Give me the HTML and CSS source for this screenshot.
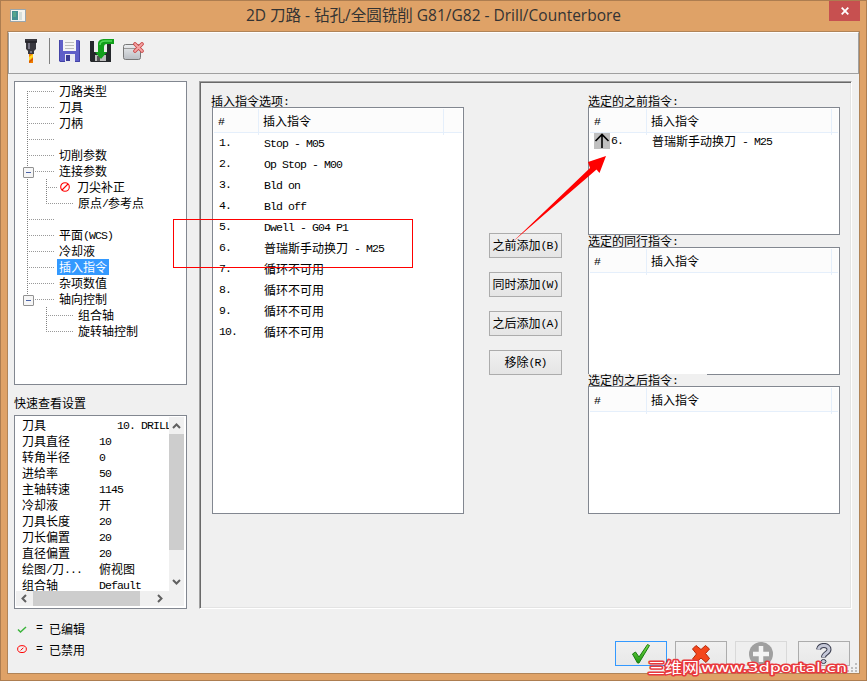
FILE: index.html
```html
<!DOCTYPE html>
<html lang="zh-CN">
<head>
  <meta charset="UTF-8">
  <meta name="viewport" content="width=device-width, initial-scale=1">
  <title>2D 刀路 - 钻孔/全圆铣削</title>
  <link rel="stylesheet" href="styles.css">
</head>
<body>
  <div class="window">
    <header class="titlebar">
      <svg class="app-icon" width="16" height="14" viewBox="0 0 16 14">
        <rect x=".5" y=".5" width="15" height="12" fill="#f4f4f0" stroke="#9ba6ab"/>
        <rect x="2" y="2" width="6" height="9" fill="#438f93"/>
        <rect x="3" y="3" width="3" height="5" fill="#55a58c"/>
        <rect x="9" y="3" width="3" height="8" fill="#d6dedb"/>
      </svg>
      <h1>2D 刀路 - 钻孔/全圆铣削 G81/G82 - Drill/Counterbore</h1>
      <button class="close" aria-label="Close">
        <svg width="8" height="8" viewBox="0 0 8 8"><path d="M.7.7l6.6 6.6M7.3.7L.7 7.3" stroke="#fff" stroke-width="1.8"/></svg>
      </button>
    </header>

    <div class="client">
      <div class="toolbar">
        <svg class="tool-drill" width="14" height="25" viewBox="0 0 14 25">
          <path d="M1 0h12v3l-1 1v6l-2 2v3H4v-3l-2-2V4L1 3z" fill="#38383f"/>
          <path d="M4 4h2v6H4zM6 12h2v2H6z" fill="#777584"/>
          <path d="M1 3h12" stroke="#15151a"/>
          <rect x="5" y="15" width="4" height="9" fill="#ef7d00"/>
          <path d="M5 18l4-3v3l-4 4z" fill="#ffd81e"/>
          <path d="M5 24v-2l4-3v2z" fill="#d65a00"/>
        </svg>
        <span class="divider"></span>
        <svg class="tool-save" width="21" height="22" viewBox="0 0 21 22">
          <path d="M0 0h20l1 1v21H1l-1-1z" fill="#5f5fc8"/>
          <path d="M.5 0v21M20.500 1v20.500H1" stroke="#4343a6" fill="none"/>
          <rect x="4" y="0" width="13" height="11" fill="#f4f4f4"/>
          <path d="M6 2.500h9M6 5.500h9M6 8.500h9" stroke="#bcbcbc"/>
          <rect x="6" y="14" width="10" height="8" fill="#e9e9f2"/>
          <rect x="7" y="15" width="4" height="6" fill="#3b3b93"/>
        </svg>
        <svg class="tool-export" width="24" height="23" viewBox="0 0 24 23">
          <path d="M0 2h21v21H1l-1-1z" fill="#25282b"/>
          <rect x="4" y="2" width="13" height="11" fill="#eee"/>
          <rect x="5" y="16" width="11" height="6" fill="#bcbcbc"/>
          <rect x="7" y="17" width="3" height="5" fill="#555"/>
          <path d="M8 5c0-4 3-5 7-5h9v5h-7c-2 0-3 1-3 3v5h3l-6 7-6-7h3z" fill="#12a01b"/>
          <path d="M10 6c0-3 2-4 5-4h7" stroke="#54d85a" stroke-width="1.500" fill="none"/>
        </svg>
        <svg class="tool-remove" width="21" height="19" viewBox="0 0 21 19">
          <defs>
            <linearGradient id="box" x2="0" y2="1"><stop offset="0" stop-color="#eceef0"/><stop offset="1" stop-color="#b9bdc3"/></linearGradient>
          </defs>
          <rect x=".5" y="2.500" width="17" height="15" rx="2" fill="url(#box)" stroke="#777"/>
          <path d="M1 6.500h16" stroke="#999"/>
          <path d="M12 2l7 7M19 2l-7 7" stroke="#c94444" stroke-width="3.600" stroke-linecap="round"/>
          <path d="M12 2l7 7M19 2l-7 7" stroke="#f3a5a5" stroke-width="1.800" stroke-linecap="round"/>
        </svg>
      </div>

      <main>
        <aside>
          <ul class="tree">
            <li><i class="guide first"></i><span>刀路类型</span></li>
            <li><i class="guide"></i><span>刀具</span></li>
            <li><i class="guide"></i><span>刀柄</span></li>
            <li><i class="guide"></i></li>
            <li><i class="guide"></i><span>切削参数</span></li>
            <li><i class="guide node"></i><span>连接参数</span></li>
            <li class="child"><i class="trunk"></i><i class="guide short"></i><svg class="forbid" width="10" height="10" viewBox="0 0 10 10"><circle cx="5" cy="5" r="4.300"/><path d="M2 8l6-6"/></svg><span>刀尖补正</span></li>
            <li class="child"><i class="trunk"></i><i class="guide last"></i><span>原点<b>/</b>参考点</span></li>
            <li><i class="guide"></i></li>
            <li><i class="guide"></i><span>平面<b>(WCS)</b></span></li>
            <li><i class="guide"></i><span>冷却液</span></li>
            <li><i class="guide"></i><span class="selected">插入指令</span></li>
            <li><i class="guide"></i><span>杂项数值</span></li>
            <li><i class="guide node last"></i><span>轴向控制</span></li>
            <li class="child"><i class="trunk none"></i><i class="guide"></i><span>组合轴</span></li>
            <li class="child"><i class="trunk none"></i><i class="guide last"></i><span>旋转轴控制</span></li>
          </ul>

          <h2>快速查看设置</h2>
          <div class="quick">
            <dl>
              <dt>刀具</dt><dd class="indent"><b>10. DRILL</b></dd>
              <dt>刀具直径</dt><dd><b>10</b></dd>
              <dt>转角半径</dt><dd><b>0</b></dd>
              <dt>进给率</dt><dd><b>50</b></dd>
              <dt>主轴转速</dt><dd><b>1145</b></dd>
              <dt>冷却液</dt><dd>开</dd>
              <dt>刀具长度</dt><dd><b>20</b></dd>
              <dt>刀长偏置</dt><dd><b>20</b></dd>
              <dt>直径偏置</dt><dd><b>20</b></dd>
              <dt>绘图<b>/</b>刀<b>...</b></dt><dd>俯视图</dd>
              <dt>组合轴</dt><dd><b>Default</b></dd>
            </dl>
            <div class="vscroll">
              <svg width="15" height="17" viewBox="0 0 15 17"><path d="M4 11l3.500-3.500L11 11"/></svg>
              <div class="vthumb"></div>
              <svg width="15" height="17" viewBox="0 0 15 17"><path d="M4 6l3.500 3.500L11 6"/></svg>
            </div>
            <div class="hscroll">
              <svg width="17" height="15" viewBox="0 0 17 15"><path d="M10 4L6.500 7.500 10 11"/></svg>
              <div class="hthumb"></div>
              <svg class="right" width="17" height="15" viewBox="0 0 17 15"><path d="M7 4l3.500 3.500L7 11"/></svg>
            </div>
          </div>

          <div class="legend">
            <p><svg width="10" height="10" viewBox="0 0 10 10"><path d="M1 5.500L3.500 8 9 3" fill="none" stroke="#3cb43c" stroke-width="1.500"/></svg><b>=</b>已编辑</p>
            <p><svg class="forbid" width="11" height="10" viewBox="0 0 11 10"><ellipse cx="5.500" cy="4" rx="4.800" ry="3.800"/><path d="M4 5.500l3-3"/></svg><b>=</b>已禁用</p>
          </div>
        </aside>

        <section class="panel">
          <div class="options">
            <h3>插入指令选项<b>:</b></h3>
            <div class="list tall">
              <div class="list-head"><span><b>#</b></span><span>插入指令</span><span></span></div>
              <div class="row"><b>1.</b><span><b>Stop - M05</b></span></div>
              <div class="row"><b>2.</b><span><b>Op Stop - M00</b></span></div>
              <div class="row"><b>3.</b><span><b>Bld on</b></span></div>
              <div class="row"><b>4.</b><span><b>Bld off</b></span></div>
              <div class="row"><b>5.</b><span><b>Dwell - G04 P1</b></span></div>
              <div class="row"><b>6.</b><span>普瑞斯手动换刀<b> - M25</b></span></div>
              <div class="row"><b>7.</b><span>循环不可用</span></div>
              <div class="row"><b>8.</b><span>循环不可用</span></div>
              <div class="row"><b>9.</b><span>循环不可用</span></div>
              <div class="row"><b>10.</b><span>循环不可用</span></div>
            </div>
          </div>

          <div class="actions">
            <button>之前添加<b>(B)</b></button>
            <button>同时添加<b>(W)</b></button>
            <button>之后添加<b>(A)</b></button>
            <button>移除<b>(R)</b></button>
          </div>

          <div class="chosen">
            <h3>选定的之前指令<b>:</b></h3>
            <div class="list">
              <div class="list-head"><span><b>#</b></span><span>插入指令</span><span></span></div>
              <div class="row">
                <svg width="16" height="16" viewBox="0 0 16 16"><rect width="16" height="16" fill="#c0c0c0"/><path d="M8 15V2M1.500 8L8 1.500 14.500 8" fill="none" stroke="#000" stroke-width="1.600"/></svg>
                <b>6.</b><span>普瑞斯手动换刀<b> - M25</b></span>
              </div>
            </div>
            <h3>选定的同行指令<b>:</b></h3>
            <div class="list">
              <div class="list-head"><span><b>#</b></span><span>插入指令</span><span></span></div>
            </div>
            <h3 class="overlap">选定的之后指令<b>:</b></h3>
            <div class="list">
              <div class="list-head"><span><b>#</b></span><span>插入指令</span><span></span></div>
            </div>
          </div>
        </section>
      </main>

      <footer>
        <button class="default" aria-label="OK">
          <svg width="20" height="22" viewBox="0 0 20 22">
            <defs><linearGradient id="ok" x2="0" y2="1"><stop offset="0" stop-color="#7be04a"/><stop offset="1" stop-color="#1c9410"/></linearGradient></defs>
            <path d="M1.500 11l3-2 3.500 5L16.500 1.500l2 1L8 20H6.500z" fill="url(#ok)" stroke="#187a12"/>
          </svg>
        </button>
        <button aria-label="Cancel">
          <svg width="20" height="20" viewBox="0 0 20 20">
            <path d="M1.500 5L5 1.500l5 4 4.500-4L18.500 5l-4 4.500 4 5L15 18.500l-5-4.500-5 4.500L1.500 15l4-5z" fill="#f4471c" stroke="#b52708"/>
          </svg>
        </button>
        <button class="disabled" aria-label="Add">
          <svg width="24" height="24" viewBox="0 0 24 24"><circle cx="12" cy="12" r="12" fill="#a0a0a0"/><path d="M12 4v16M4 12h16" stroke="#f4f4f4" stroke-width="4.500"/></svg>
        </button>
        <button class="help" aria-label="Help">
          <svg width="16" height="22" viewBox="0 0 16 22">
            <path d="M2.500 6.500C3 1 13 1 13 6.500c0 4-5.500 3.500-5.500 8" fill="none" stroke="#3c3f50" stroke-width="5"/>
            <path d="M2.500 6.500C3 1 13 1 13 6.500c0 4-5.500 3.500-5.500 7.600" fill="none" stroke="#c5c8d8" stroke-width="3"/>
            <ellipse cx="7.500" cy="18.500" rx="2.500" ry="2" fill="#c5c8d8" stroke="#3c3f50"/>
          </svg>
        </button>
      </footer>
    </div>

    <!-- markup drawn over the dialog -->
    <svg class="annotations" width="867" height="681" viewBox="0 0 867 681">
      <path fill="#bdbdbd" d="M855 663h2v2h-2zM851 667h2v2h-2zM855 667h2v2h-2zM847 670h2v2h-2zM851 670h2v2h-2zM855 670h2v2h-2z"/>
      <rect x="173.500" y="219.500" width="239" height="48" fill="none" stroke="#f00"/>
      <path d="M512 242.500L590 168l-2-6 18-6-6.500 17-3-3.500z" fill="#f00"/>
      <g class="watermark">
        <text x="648" y="673" class="cjk" textLength="51" lengthAdjust="spacingAndGlyphs">三维网</text>
        <text x="701" y="672" textLength="146" lengthAdjust="spacingAndGlyphs">www.3dportal.cn</text>
      </g>
    </svg>
  </div>
</body>
</html>
```
FILE: styles.css
```css
* {
  box-sizing: border-box;
}
body {
  margin: 0;
  font-family: 'Noto Sans CJK SC', sans-serif;
  font-size: 12px;
  line-height: 16px;
  color: #000;
}
h1, h2, h3, p, ul, dl, dd {
  margin: 0;
  padding: 0;
  font-weight: normal;
}
/* half-width characters take exactly 6px each */
b {
  position: relative;
  top: -1px;
  font-family: 'Liberation Mono', monospace;
  font-size: 11.5px;
  font-weight: normal;
  letter-spacing: -0.9px;
  white-space: pre;
}
button {
  font: inherit;
  color: inherit;
  padding: 0;
}
svg {
  display: block;
  flex: none;
}
.window {
  position: relative;
  width: 867px;
  height: 681px;
  background: #dfa267;
  border: 1px solid #ad7d50;
  padding: 0 6px 6px;
  overflow: hidden;
}
.titlebar {
  display: flex;
  height: 30px;
}
.app-icon {
  margin: 8px 0 0 3px;
}
.titlebar h1 {
  flex: 1;
  text-align: center;
  padding-left: 12px;
  font-family: 'Open Sans', 'Noto Sans CJK SC', sans-serif;
  font-size: 15.5px;
  line-height: 29px;
  color: #333;
  white-space: nowrap;
}
.close {
  width: 31px;
  height: 20px;
  display: flex;
  align-items: center;
  justify-content: center;
  background: #c75050;
  border: 0;
}
.client {
  width: 853px;
  height: 643px;
  background: #f0f0f0;
  border: 1px solid #b08458;
}
.toolbar {
  height: 42px;
  display: flex;
  align-items: flex-start;
  border: 1px solid #a0a0a0;
  border-top-color: #fff;
  box-shadow: inset 1px 0 #fff;
}
.tool-drill {
  margin: 6px 0 0 15px;
}
.divider {
  width: 1px;
  height: 26px;
  margin: 5px 0 0 11px;
  background: #808080;
}
.tool-save {
  margin: 7px 0 0 9px;
}
.tool-export {
  margin: 6px 0 0 10px;
}
.tool-remove {
  margin: 9px 0 0 9px;
}
main {
  display: flex;
  gap: 12px;
  padding: 7px 0 0 6px;
}
aside {
  width: 173px;
}
.tree {
  height: 304px;
  padding: 1px 0 0 12px;
  background: #fff;
  border: 1px solid #828790;
  list-style: none;
}
.tree li {
  display: flex;
  height: 16px;
}
.tree span {
  padding: 0 2px;
  margin-left: 3px;
  white-space: nowrap;
}
.tree .selected {
  background: #3399ff;
  color: #fff;
}
.guide, .trunk {
  flex: none;
  width: 27px;
  height: 16px;
  position: relative;
  background:
    repeating-linear-gradient(to bottom, #808080 0 1px, transparent 1px 2px) 0 0 / 1px 16px no-repeat,
    repeating-linear-gradient(to right, #999 0 1px, transparent 1px 2px) 0 8px / 27px 1px no-repeat;
}
.trunk {
  width: 19px;
  background-size: 1px 16px, 0 0;
}
.trunk.none {
  background: none;
}
.guide.first {
  background-position: 0 8px, 0 8px;
}
.guide.last {
  background-size: 1px 8px, 27px 1px;
}
.guide.short {
  width: 12px;
}
.guide.node::before {
  content: '';
  position: absolute;
  left: -4px;
  top: 4px;
  width: 9px;
  height: 9px;
  border: 1px solid #919191;
  border-radius: 1px;
  background: linear-gradient(#4b63a7, #4b63a7) center / 5px 1px no-repeat #f6f6f6;
}
.forbid {
  fill: none;
  stroke: #f00;
  stroke-width: 1.1;
}
.tree .forbid {
  margin: 3px 2px 0;
}
.tree .forbid + span {
  margin-left: 3px;
}
h2 {
  font-size: 12px;
  line-height: 16px;
  margin: 10px 0 4px;
}
.quick {
  height: 194px;
  display: grid;
  grid-template: 174px 15px / 153px 15px;
  padding: 1px;
  background: #fff;
  border: 1px solid #828790;
}
.quick dl {
  display: grid;
  grid-template-columns: 77px 1fr;
  grid-auto-rows: 16px;
  align-content: start;
  padding-left: 6px;
  overflow: hidden;
  white-space: nowrap;
}
.quick .indent {
  padding-left: 18px;
  overflow: hidden;
}
.vscroll {
  display: flex;
  flex-direction: column;
  background: #f0f0f0;
}
.vthumb {
  height: 116px;
  margin-bottom: 24px;
  background: #cdcdcd;
}
.hscroll {
  grid-column: 1 / 3;
  display: flex;
  background: #f0f0f0;
}
.hthumb {
  width: 107px;
  background: #cdcdcd;
}
.hscroll .right {
  margin-left: 11px;
}
.vscroll path, .hscroll path {
  fill: none;
  stroke: #606060;
  stroke-width: 2;
}
.legend {
  padding: 12px 0 0 3px;
}
.legend p {
  display: flex;
  align-items: center;
  height: 16px;
  margin-bottom: 5px;
}
.legend svg {
  width: 10px;
}
.legend b {
  margin: 0 7px 0 9px;
}
.panel {
  width: 653px;
  height: 528px;
  display: flex;
  align-items: flex-start;
  padding: 13px 0 0 11px;
  border: 1px solid;
  border-color: #a0a0a0 #fff #fff #a0a0a0;
  box-shadow: inset 1px 1px #696969, inset -1px -1px #e3e3e3;
}
h3 {
  font-size: 12px;
  line-height: 12px;
  height: 12px;
}
.options {
  width: 253px;
  padding-left: 1px;
}
.options h3 {
  margin-left: -1px;
}
.list {
  width: 252px;
  height: 128px;
  padding: 1px;
  background: #fff;
  border: 1px solid #828790;
}
.list.tall {
  height: 407px;
}
.list-head {
  display: grid;
  grid-template-columns: 57px 185px 1fr;
  height: 24px;
  line-height: 24px;
  background: #fcfcfc;
  border-bottom: 1px solid #e5effb;
}
.list-head span {
  padding-left: 4px;
  border-right: 1px solid #e5effb;
}
.list-head span:last-child {
  border: 0;
}
.tall .list-head {
  grid-template-columns: 45px 185px 1fr;
}
.row {
  display: flex;
  height: 21px;
  line-height: 20px;
  padding-left: 5px;
}
.row > b {
  top: 0;
  width: 45px;
}
.chosen .row {
  line-height: 16px;
  padding-left: 4px;
}
.chosen .row > b {
  width: 42px;
  padding-left: 1px;
}
.actions {
  display: flex;
  flex-direction: column;
  gap: 14px;
  padding: 138px 26px 0 25px;
}
.actions button {
  width: 73px;
  height: 25px;
  border: 1px solid #acacac;
  background: linear-gradient(#f0f0f0, #e5e5e5);
  white-space: nowrap;
}
.chosen h3.overlap {
  position: relative;
  width: 119px;
  height: 12px;
  margin-top: -1px;
  background: #f0f0f0;
}
footer {
  display: flex;
  justify-content: flex-end;
  gap: 8px;
  margin-top: 32px;
  padding: 0 9px 0 0;
}
/* the legend column runs lower than the panel, so the footer shares its rows */
main {
  height: 535px;
}
footer button {
  width: 52px;
  height: 25px;
  display: flex;
  align-items: center;
  justify-content: center;
  border: 1px solid #acacac;
  background: linear-gradient(#f0f0f0, #e8e8e8);
}
footer .default {
  border-color: #3399ff;
}
footer .disabled {
  border-color: #d9d9d9;
  background: #efefef;
}
footer .help {
  margin-left: 3px;
}
.annotations {
  position: absolute;
  left: -1px;
  top: -1px;
  pointer-events: none;
}
.watermark text {
  font-family: 'DejaVu Sans', sans-serif;
  font-size: 13px;
  fill: #fff;
  stroke: #e8383d;
  stroke-width: 3px;
  stroke-linejoin: round;
  paint-order: stroke;
}
.watermark .cjk {
  font-family: 'Noto Sans CJK SC', sans-serif;
  font-size: 15px;
}
```
